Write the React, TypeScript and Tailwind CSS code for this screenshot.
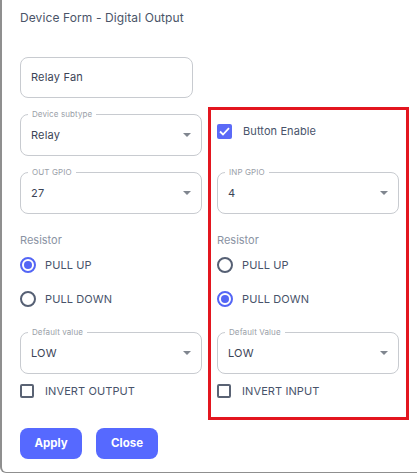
import React from "react";

const Select = ({ label, value }: { label: string; value: string }) => (
  <div className="relative flex h-[42px] w-[182px] items-center rounded-[8px] border border-[#c8cbd0] pl-[10px] pr-[10px]">
    <span className="absolute left-[7px] top-[-6px] bg-white px-[4px] text-[8px] leading-[11px] tracking-[0.1px] text-[#9aa0a8]">
      {label}
    </span>
    <span className="flex-1 text-[11px] tracking-[0.2px] text-[#3b4456]">{value}</span>
    <svg width="8" height="4" viewBox="0 0 8 4">
      <path d="M0 0 L8 0 L4 4Z" fill="#80868f" />
    </svg>
  </div>
);

const Radio = ({ label, checked }: { label: string; checked?: boolean }) => (
  <div className="flex h-[34px] items-center">
    <span
      className={
        "flex h-[16px] w-[16px] items-center justify-center rounded-full border-2 " +
        (checked ? "border-[#5466f5]" : "border-[#566074]")
      }
    >
      {checked && <span className="h-[8px] w-[8px] rounded-full bg-[#5466f5]" />}
    </span>
    <span className="ml-[9px] text-[11px] tracking-[0.1px] text-[#48536a]">{label}</span>
  </div>
);

const Check = ({ label, checked }: { label: string; checked?: boolean }) => (
  <div className="flex h-[14px] items-center">
    {checked ? (
      <span className="flex h-[15px] w-[15px] items-center justify-center rounded-[2px] bg-[#5b6af7]">
        <svg width="11" height="9" viewBox="0 0 11 9">
          <path d="M1 4.5 L4 7.5 L10 1.2" fill="none" stroke="white" strokeWidth="1.8" />
        </svg>
      </span>
    ) : (
      <span className="h-[14px] w-[14px] rounded-[2px] border-2 border-[#5a6374]" />
    )}
    <span className="ml-[11px] text-[11px] tracking-[0.1px] text-[#48536a]">{label}</span>
  </div>
);

const Column = ({
  label,
  value,
  pullUp,
  defLabel,
  checkLabel,
}: {
  label: string;
  value: string;
  pullUp: boolean;
  defLabel: string;
  checkLabel: string;
}) => (
  <>
    <Select label={label} value={value} />
    <div className="mt-[18px] h-[16px] text-[11px] leading-[16px] text-[#8a93a3]">Resistor</div>
    <Radio label="PULL UP" checked={pullUp} />
    <Radio label="PULL DOWN" checked={!pullUp} />
    <div className="mt-[16px]">
      <Select label={defLabel} value="LOW" />
    </div>
    <div className="mt-[10px]">
      <Check label={checkLabel} />
    </div>
  </>
);

export default function App() {
  return (
    <div className="relative h-[473px] w-[417px] overflow-hidden rounded-bl-[6px] border-b border-l-2 border-[#8f8f8f] bg-white font-['Inter',sans-serif]">
      <div className="pl-[18px] pt-[8px] text-[12px] leading-[20px] tracking-[0.1px] text-[#4a5468]">
        Device Form - Digital Output
      </div>
      <div className="ml-[18px] mt-[29px] flex h-[41px] w-[173px] items-center rounded-[8px] border border-[#c8cbd0] pl-[10px] text-[11px] tracking-[0.2px] text-[#3b4456]">
        Relay Fan
      </div>
      <div className="ml-[18px] mt-[9px] flex items-start">
        <div className="flex w-[182px] flex-col pt-[7px]">
          <Select label="Device subtype" value="Relay" />
          <div className="mt-[16px] flex flex-col">
            <Column label="OUT GPIO" value="27" pullUp={true} defLabel="Default value" checkLabel="INVERT OUTPUT" />
          </div>
        </div>
        <div className="ml-[6px] flex flex-col border-[3px] border-[#e3161f] pb-[19px] pl-[6px] pr-[7px]">
          <div className="mt-[14px] flex h-[14px] items-center">
            <Check label="Button Enable" checked />
          </div>
          <div className="mt-[34px] flex flex-col">
            <Column label="INP GPIO" value="4" pullUp={false} defLabel="Default Value" checkLabel="INVERT INPUT" />
          </div>
        </div>
      </div>
      <div className="ml-[18px] mt-[8px] flex gap-[14px]">
        <button className="h-[31px] w-[62px] rounded-[8px] bg-[#5669ff] text-[11.5px] font-bold text-white">Apply</button>
        <button className="h-[31px] w-[62px] rounded-[8px] bg-[#5669ff] text-[11.5px] font-bold text-white">Close</button>
      </div>
    </div>
  );
}
